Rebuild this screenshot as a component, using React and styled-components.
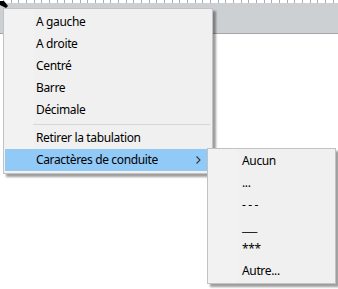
import React from "react";
import styled, { createGlobalStyle } from "styled-components";

const GlobalStyle = createGlobalStyle`
  html, body { margin: 0; padding: 0; background: #fff; }
  body { font-family: "Noto Sans", "Open Sans", sans-serif; }
`;

const Page = styled.div`
  position: relative;
  width: 338px;
  height: 289px;
  overflow: hidden;
  background: #fff;
`;

// graduation ticks of the ruler
const TickRow = styled.div`
  display: flex;
  height: 3px;
  padding-left: 3px;
  background: #fff;
`;

const TickCell = styled.div`
  flex: 0 0 ${(p) => p.w}px;
  height: 3px;
  border-left: 1px solid #a9adb1;
  box-sizing: border-box;
`;

const Band = styled.div`
  height: 31px;
  background: #ccd0d3;
  border-bottom: 1px solid #a3a7ab;
  box-sizing: border-box;
`;

const Cursor = styled.svg`
  position: absolute;
  left: 0;
  top: 0;
`;

const Menu = styled.div`
  position: absolute;
  left: ${(p) => p.x}px;
  top: ${(p) => p.y}px;
  width: ${(p) => p.w}px;
  box-sizing: border-box;
  padding: ${(p) => p.pad};
  background: linear-gradient(to right, #f2f2f2 0 30px, #f0f0f0 30px);
  border: 1px solid #c2c2c2;
  box-shadow: 3px 3px 2px rgba(0, 0, 0, 0.38);
  font-size: 12px;
  letter-spacing: -0.35px;
  color: #000;
`;

const Item = styled.div`
  display: flex;
  align-items: center;
  height: 22px;
  padding-left: ${(p) => p.indent}px;
  padding-right: 9px;
  background: ${(p) => (p.active ? "#91c9f7" : "transparent")};
  white-space: nowrap;
  line-height: 22px;
`;

const Label = styled.span`
  flex: 1;
`;

const Separator = styled.div`
  height: 6px;
  display: flex;
  align-items: center;
  padding-left: 28px;
  &::after {
    content: "";
    flex: 1;
    height: 1px;
    background: #d7d7d7;
  }
`;

const Chevron = () => (
  <svg width="5" height="8" viewBox="0 0 5 8">
    <path d="M0.5 0.5 L4 4 L0.5 7.5" fill="none" stroke="#333" strokeWidth="1.1" />
  </svg>
);

const tickWidths = [];
for (let i = 0; i < 15; i++) tickWidths.push(8, 7, 8);

export default function App() {
  return (
    <>
      <GlobalStyle />
      <Page>
        <TickRow>
          {tickWidths.map((w, i) => (
            <TickCell key={i} w={w} />
          ))}
        </TickRow>
        <Band />
        <Cursor width="10" height="11" viewBox="0 0 10 11">
          <polygon points="0,1 4,1 8,6 6,8 0,5" fill="#000" />
        </Cursor>

        <Menu x={3} y={8} w={210} pad="2px 2px 2px 1px">
          <Item indent={31}><Label>A gauche</Label></Item>
          <Item indent={31}><Label>A droite</Label></Item>
          <Item indent={31}><Label>Centré</Label></Item>
          <Item indent={31}><Label>Barre</Label></Item>
          <Item indent={31}><Label>Décimale</Label></Item>
          <Separator />
          <Item indent={31}><Label>Retirer la tabulation</Label></Item>
          <Item indent={31} active>
            <Label>Caractères de conduite</Label>
            <Chevron />
          </Item>
        </Menu>

        <Menu x={207} y={148} w={129} pad="1px 2px 1px 1px">
          <Item indent={33}><Label>Aucun</Label></Item>
          <Item indent={33}><Label>...</Label></Item>
          <Item indent={33}><Label>- - -</Label></Item>
          <Item indent={33}><Label>___</Label></Item>
          <Item indent={33}><Label>***</Label></Item>
          <Item indent={33}><Label>Autre...</Label></Item>
        </Menu>
      </Page>
    </>
  );
}
